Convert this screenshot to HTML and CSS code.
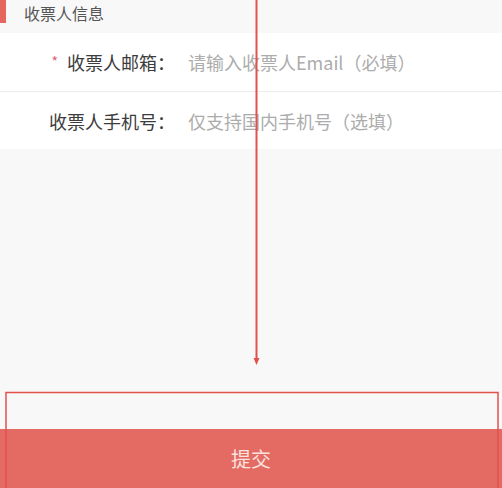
FILE: index.html
```html
<!DOCTYPE html>
<html lang="zh-CN">
<head>
    <meta charset="UTF-8">
    <meta name="viewport" content="width=device-width, initial-scale=1.0">
    <title>收票人信息</title>
    <link rel="stylesheet" href="styles.css">
</head>
<body>
    <div class="page">
        <div class="section-title">
            <span class="bar"></span>
            <h3>收票人信息</h3>
        </div>

        <div class="form">
            <div class="field">
                <label><span class="required">*</span>收票人邮箱：</label>
                <input type="text" placeholder="请输入收票人Email（必填）">
            </div>
            <div class="field">
                <label>收票人手机号：</label>
                <input type="text" placeholder="仅支持国内手机号（选填）">
            </div>
        </div>

        <div class="spacer"></div>

        <button class="submit">提交</button>
    </div>

    <!-- annotation marks drawn over the screenshot -->
    <svg class="marks" width="502" height="488" viewBox="0 0 502 488">
        <line x1="256.5" y1="0" x2="256.5" y2="360" stroke="#e2524c" stroke-width="2"/>
        <path d="M253.5 358 L256.5 365 L259.5 358 Z" fill="#e2524c"/>
        <rect x="6" y="392.5" width="492" height="110" fill="none" stroke="#e2524c" stroke-width="1.5"/>
    </svg>
</body>
</html>
```

FILE: styles.css
```css
* {
    margin: 0;
    padding: 0;
    box-sizing: border-box;
}

html, body {
    height: 100%;
    width: 100%;
    font-family: "Noto Sans CJK SC", "Noto Sans", sans-serif;
    background: #f8f8f8;
    overflow: hidden;
}

.page {
    min-height: 100vh;
    display: flex;
    flex-direction: column;
}

.section-title {
    display: flex;
    align-items: flex-start;
    height: 33px;
}

.section-title .bar {
    width: 6px;
    height: 23px;
    background: #e4665f;
}

.section-title h3 {
    margin-left: 18px;
    font-size: 16px;
    font-weight: 400;
    line-height: 26px;
    color: #555;
}

.form {
    background: #fff;
}

.field {
    display: flex;
    align-items: center;
    height: 58px;
}

.field + .field {
    border-top: 1px solid #ececec;
}

.field label {
    width: 175px;
    flex-shrink: 0;
    text-align: right;
    font-size: 18px;
    font-weight: 400;
    color: #3c3c3c;
    white-space: nowrap;
}

.required {
    color: #e0607a;
    font-size: 14px;
    margin-right: 9px;
    position: relative;
    top: -3px;
}

.field input {
    margin-left: 13px;
    flex: 1;
    border: none;
    outline: none;
    background: transparent;
    font-family: inherit;
    font-size: 18px;
    color: #333;
}

.field input::placeholder {
    color: #acacac;
}

.spacer {
    flex: 1;
}

.submit {
    height: 59px;
    width: 100%;
    border: none;
    background: #e46a64;
    color: #fbe2de;
    font-family: inherit;
    font-size: 20px;
}

.marks {
    position: absolute;
    left: 0;
    top: 0;
    pointer-events: none;
}
```
